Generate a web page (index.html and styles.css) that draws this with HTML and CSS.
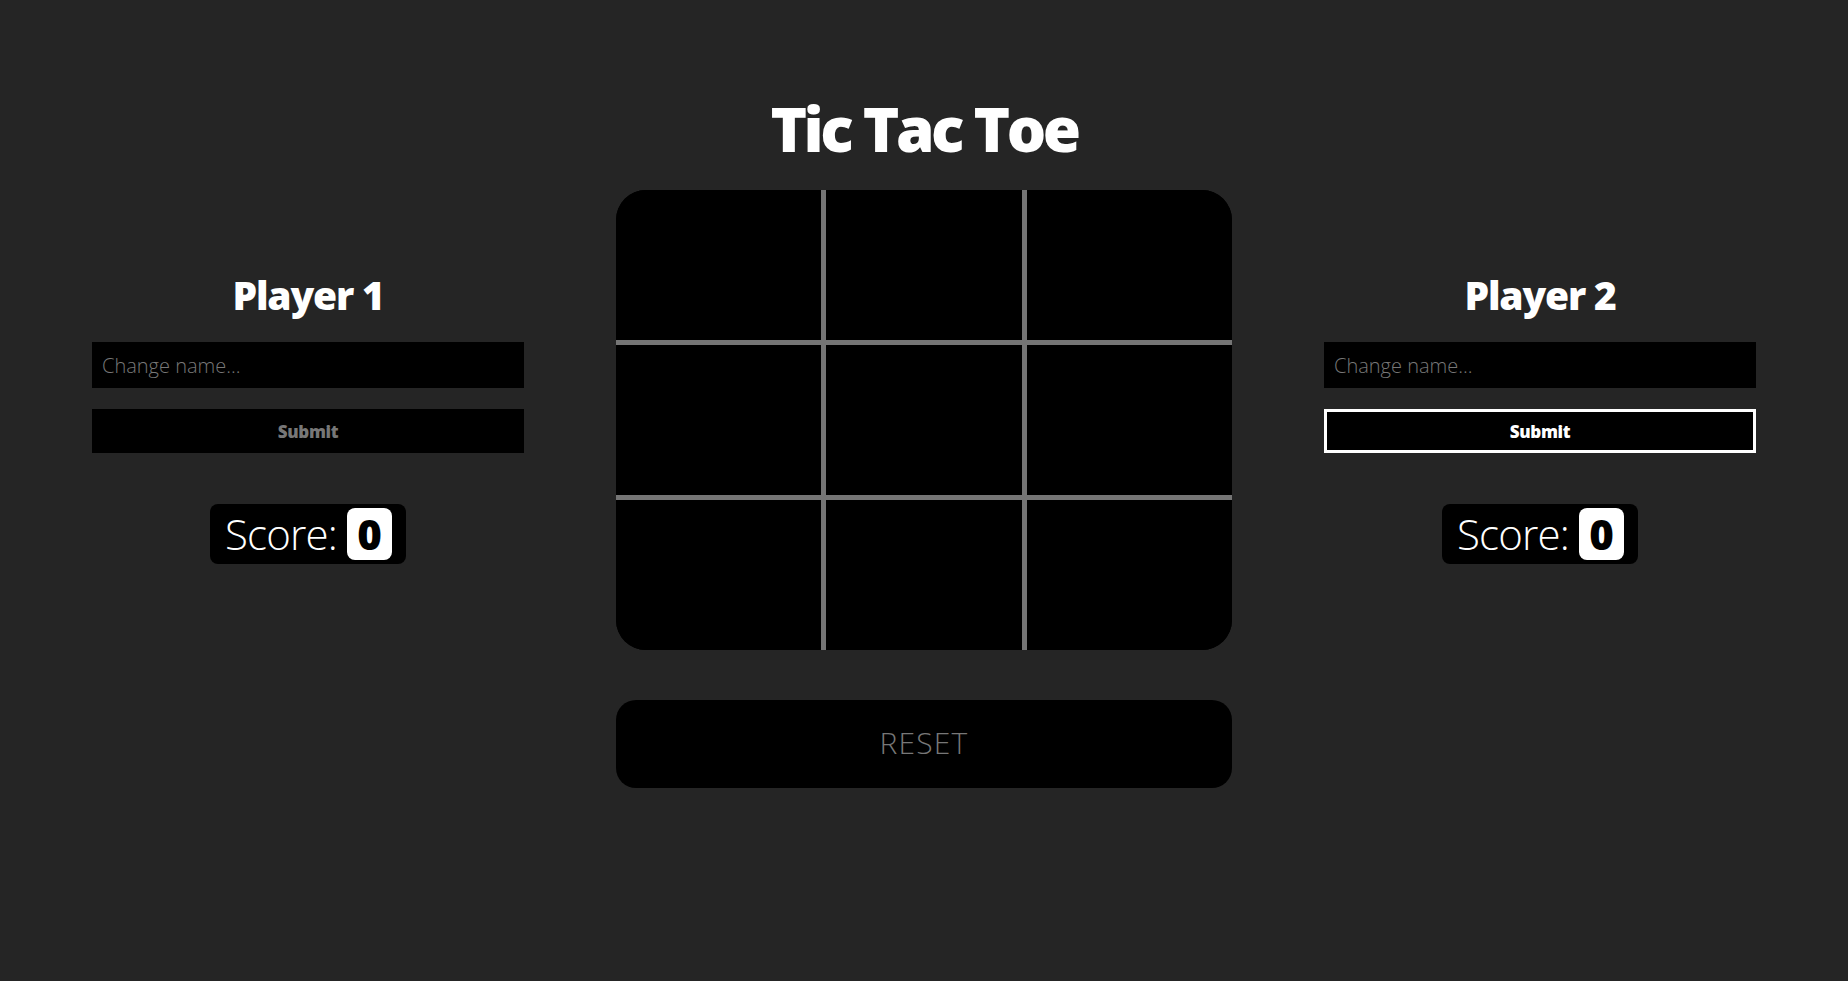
FILE: index.html
```html
<!DOCTYPE html>
<html lang="en">
<head>
<meta charset="utf-8">
<title>Tic Tac Toe</title>
<link rel="stylesheet" href="styles.css">
</head>
<body>
<div class="page">
  <h1 class="title">Tic Tac Toe</h1>
  <div class="main">
    <section class="player">
      <h2 class="player-name">Player 1</h2>
      <input class="name-input" type="text" placeholder="Change name...">
      <button class="submit">Submit</button>
      <div class="score">
        <span class="score-label">Score:</span>
        <span class="score-value">0</span>
      </div>
    </section>
    <div class="center">
      <div class="board">
        <div class="cell"></div>
        <div class="cell mid-col"></div>
        <div class="cell"></div>
        <div class="cell mid-row"></div>
        <div class="cell mid-row mid-col"></div>
        <div class="cell mid-row"></div>
        <div class="cell"></div>
        <div class="cell mid-col"></div>
        <div class="cell"></div>
      </div>
      <button class="reset">RESET</button>
    </div>
    <section class="player">
      <h2 class="player-name">Player 2</h2>
      <input class="name-input" type="text" placeholder="Change name...">
      <button class="submit submit-active">Submit</button>
      <div class="score">
        <span class="score-label">Score:</span>
        <span class="score-value">0</span>
      </div>
    </section>
  </div>
</div>
</body>
</html>
```

FILE: styles.css
```css
html, body {
  margin: 0;
  padding: 0;
  background: #252525;
  height: 100%;
}

body {
  font-family: "Open Sans", "Liberation Sans", sans-serif;
  color: #fff;
}

.page {
  display: flex;
  flex-direction: column;
  align-items: center;
  padding-top: 97px;
}

.title {
  margin: 0;
  font-size: 62px;
  line-height: 62px;
  font-weight: 800;
  letter-spacing: -3.5px;
}

.main {
  width: 100%;
  margin-top: 31px;
  display: flex;
  justify-content: space-evenly;
  align-items: flex-start;
}

.player {
  width: 432px;
  margin-top: 85px;
  display: flex;
  flex-direction: column;
  align-items: center;
}

.player-name {
  margin: 0;
  font-size: 39px;
  line-height: 39px;
  font-weight: 800;
  letter-spacing: -1.2px;
}

.name-input {
  box-sizing: border-box;
  width: 100%;
  height: 46px;
  margin-top: 28px;
  padding: 0 10px;
  border: none;
  outline: none;
  background: #000;
  color: #fff;
  font-family: "Open Sans", sans-serif;
  font-size: 20px;
  font-weight: 300;
}

.name-input::placeholder {
  color: #777;
}

.submit {
  box-sizing: border-box;
  width: 100%;
  height: 44px;
  margin-top: 21px;
  border: 3px solid #000;
  background: #000;
  color: #777;
  font-family: "Open Sans", sans-serif;
  font-size: 17px;
  font-weight: 800;
  letter-spacing: -0.3px;
  cursor: pointer;
}

.submit-active {
  border-color: #fff;
  color: #fff;
}

.score {
  margin-top: 51px;
  height: 60px;
  box-sizing: border-box;
  padding: 4px 14px 4px 15px;
  background: #000;
  border-radius: 8px;
  display: flex;
  align-items: center;
  gap: 10px;
}

.score-label {
  font-size: 42px;
  font-weight: 300;
  line-height: 1;
  letter-spacing: -0.8px;
}

.score-value {
  width: 45px;
  height: 52px;
  background: #fff;
  color: #000;
  border-radius: 8px;
  display: flex;
  align-items: center;
  justify-content: center;
  font-size: 42px;
  font-weight: 800;
  line-height: 1;
}

.center {
  width: 616px;
  display: flex;
  flex-direction: column;
}

.board {
  width: 616px;
  height: 460px;
  background: #000;
  border-radius: 30px;
  overflow: hidden;
  display: grid;
  grid-template-columns: 205px 206px 205px;
  grid-template-rows: 150px 160px 150px;
}

.cell {
  box-sizing: border-box;
  background: #000;
}

.mid-col {
  border-left: 5px solid #757575;
  border-right: 5px solid #757575;
}

.mid-row {
  border-top: 5px solid #757575;
  border-bottom: 5px solid #757575;
}

.reset {
  margin-top: 50px;
  height: 88px;
  width: 100%;
  padding: 0 0 4px;
  border: none;
  border-radius: 20px;
  background: #000;
  color: #777;
  font-family: "Open Sans", sans-serif;
  font-size: 30px;
  font-weight: 300;
  letter-spacing: 1.2px;
  cursor: pointer;
}
```
